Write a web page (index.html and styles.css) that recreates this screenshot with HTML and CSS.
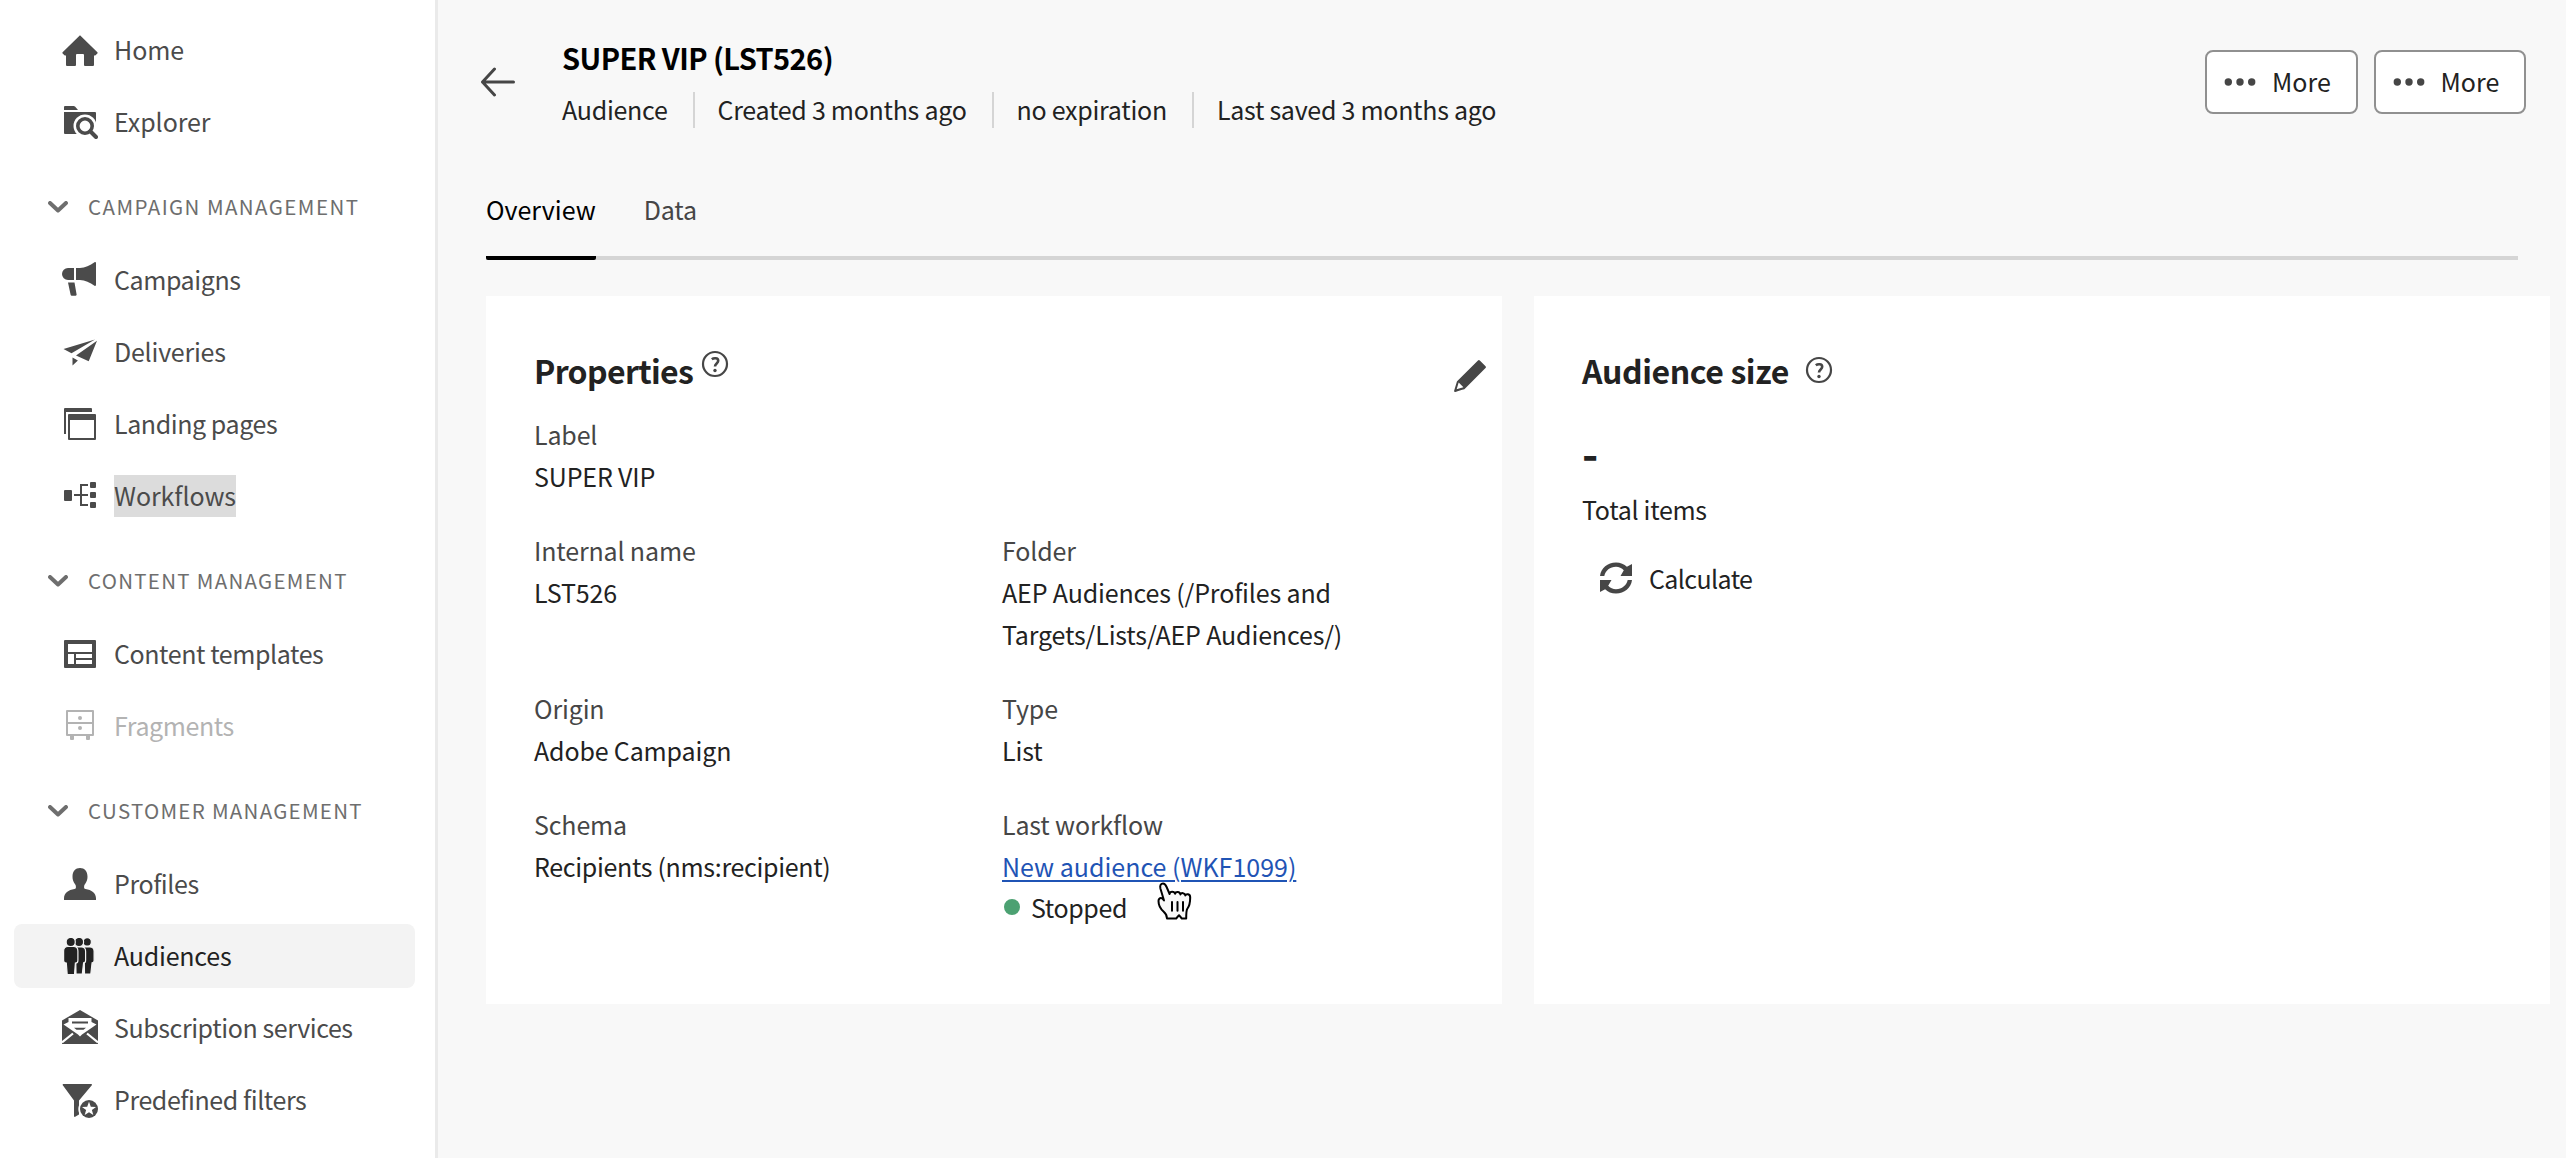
FILE: index.html
```html
<!DOCTYPE html>
<html lang="en">
<head>
<meta charset="utf-8">
<title>SUPER VIP (LST526)</title>
<link rel="stylesheet" href="styles.css">
</head>
<body>
<div class="app">
  <nav class="sidebar">
    <ul class="nav-list">
      <li class="nav-item loose"><svg class="icon" viewBox="0 0 36 36"><path d="M18 3.2 35.4 20.2a.9.9 0 0 1 0 1.2L33.2 23.5H32V33a1 1 0 0 1-1 1h-8a1 1 0 0 1-1-1V23a1 1 0 0 0-1-1h-6a1 1 0 0 0-1 1v10a1 1 0 0 1-1 1H5a1 1 0 0 1-1-1v-9.500H2.800L.6 21.400a.9.9 0 0 1 0-1.200z"/></svg><span>Home</span></li>
      <li class="nav-item loose"><svg class="icon" viewBox="0 0 36 36"><path d="M2 6V3a1 1 0 0 1 1-1h8.600a2 2 0 0 1 1.400.6L16 6zM2 8h31a1 1 0 0 1 1 1v21H3a1 1 0 0 1-1-1z"/><circle class="knockout" cx="23" cy="22" r="11.500"/><path class="knockout" d="M26 24h9v8h-9z"/><circle class="line thick" cx="23" cy="22" r="7.200"/><path class="line handle" d="M28.500 27.500 34 33"/></svg><span>Explorer</span></li>
    </ul>
    <h2 class="nav-heading wider"><svg class="chevron" viewBox="0 0 20 12"><path d="m2 2 8 7.500L18 2"/></svg><span>CAMPAIGN MANAGEMENT</span></h2>
    <ul class="nav-list">
      <li class="nav-item"><svg class="icon" viewBox="0 0 36 36"><path d="M12 6v12H6A6 6 0 0 1 6 6zM14 6h4c5 0 10-2.500 14.500-5.700.8-.5 1.500-.2 1.500.6v22.200c0 .8-.7 1.100-1.500.6C28 20.500 23 18 18 18h-4zM6 20.500h6.500L14.600 32.500a1 1 0 0 1-1 1.200H9.800a1.200 1.200 0 0 1-1.200-1z"/></svg><span>Campaigns</span></li>
      <li class="nav-item medium"><svg class="icon" viewBox="0 0 36 36"><path d="M1.500 15 33 5.500 9.500 19.200zM35 6.700 26.700 27.300 14 21.500zM10.500 23.500l5.400 2.900L10.500 31.500z"/></svg><span>Deliveries</span></li>
      <li class="nav-item"><svg class="icon" viewBox="0 0 36 36"><path d="M30 6V3a1 1 0 0 0-1-1H3a1 1 0 0 0-1 1v25h2V6z"/><path fill-rule="evenodd" d="M7 8h26a1 1 0 0 1 1 1v24a1 1 0 0 1-1 1H7a1 1 0 0 1-1-1V9a1 1 0 0 1 1-1zm1 6v18h24V14z"/></svg><span>Landing pages</span></li>
      <li class="nav-item loose"><svg class="icon" viewBox="0 0 36 36"><rect x="2" y="12" width="8" height="11" rx="1"/><rect x="28" y="4" width="6" height="6" rx="1"/><rect x="28" y="14" width="6" height="6" rx="1"/><rect x="28" y="24" width="6" height="6" rx="1"/><path d="M12 16h6V6h8v2h-6v8h6v2h-6v8h6v2h-8V18h-6z"/></svg><span class="selected-text">Workflows</span></li>
    </ul>
    <h2 class="nav-heading"><svg class="chevron" viewBox="0 0 20 12"><path d="m2 2 8 7.500L18 2"/></svg><span>CONTENT MANAGEMENT</span></h2>
    <ul class="nav-list">
      <li class="nav-item"><svg class="icon" viewBox="0 0 36 36"><path fill-rule="evenodd" d="M3 4h30a1 1 0 0 1 1 1v26a1 1 0 0 1-1 1H3a1 1 0 0 1-1-1V5a1 1 0 0 1 1-1zm3 4v8h24V8zm0 10v10h6V18zm8 0v4h16v-4zm0 6v4h16v-4z"/></svg><span>Content templates</span></li>
      <li class="nav-item disabled"><svg class="icon" viewBox="0 0 36 36"><path fill-rule="evenodd" d="M5 2h26a1 1 0 0 1 1 1v24a1 1 0 0 1-1 1h-3v3a1 1 0 0 1-1 1h-2a1 1 0 0 1-1-1v-3H12v3a1 1 0 0 1-1 1H9a1 1 0 0 1-1-1v-3H5a1 1 0 0 1-1-1V3a1 1 0 0 1 1-1zm1 2v10h24V4zm0 12v10h24V16z"/><circle cx="18" cy="10" r="2"/><circle cx="18" cy="20" r="2"/></svg><span>Fragments</span></li>
    </ul>
    <h2 class="nav-heading"><svg class="chevron" viewBox="0 0 20 12"><path d="m2 2 8 7.500L18 2"/></svg><span>CUSTOMER MANAGEMENT</span></h2>
    <ul class="nav-list">
      <li class="nav-item"><svg class="icon" viewBox="0 0 36 36"><path d="M34 34v-1.700c0-5-4.500-8.300-10.500-9.200-1-.1-1.400-.7-1.400-1.500v-1.200c0-1 .4-1.600 1-2.400C24.700 16 25.500 13.500 25.500 10.800 25.500 5 22.500 2 18 2S10.500 5 10.500 10.800c0 2.700.8 5.200 2.400 7.200.6.8 1 1.400 1 2.400v1.200c0 .8-.4 1.400-1.400 1.500C6.500 24 2 27.300 2 32.300V34z"/></svg><span>Profiles</span></li>
      <li class="nav-item active medium"><svg class="icon people" viewBox="0 0 36 36"><g><circle cx="25.200" cy="3.900" r="4.200"/><path d="M22 9h6c2.400 0 4.100 1.600 4.100 4.200v9.300c0 1.500-.8 2.300-2 2.300L28.800 36H22.500z"/></g><g><circle cx="17" cy="3.900" r="4.600"/><path d="M13.500 9h6c2.400 0 4.100 1.600 4.100 4.200v9.300c0 1.500-.8 2.300-2 2.300L20.300 36H14z"/></g><g><circle cx="8.700" cy="3.900" r="4.600"/><path d="M6 8.500h5.600c2.400 0 4.300 1.800 4.300 4.500v9.500c0 1.500-1 2.600-2.500 2.600L12.500 36.500H5.200L4.300 25.100c-1.800 0-2.700-1-2.700-2.600V13c0-2.700 1.900-4.500 4.400-4.500z"/></g></svg><span>Audiences</span></li>
      <li class="nav-item"><svg class="icon" viewBox="0 0 36 36"><path d="M18 0 36 10.500V34H0V10.500z"/><path class="knockout" d="M6.500 8h23v4l5 2.500L20 24.500 18 26.500l-2-2L1.500 14.500l5-2.500z"/><path class="cut" d="M0 32.500 11 23.500M36 32.500 25 23.500"/><path d="M10 11.500h16v2H10zM12 17.800h12l-2.500 2h-7z"/></svg><span>Subscription services</span></li>
      <li class="nav-item"><svg class="icon" viewBox="0 0 36 36"><path d="M1.300 2h28a.7.7 0 0 1 .5 1.200L17 18.500V32.500l-3.800 2.300a.8.8 0 0 1-1.200-.7V18.500L.8 3.200A.7.7 0 0 1 1.300 2z"/><circle class="knockout" cx="27" cy="27" r="10.700"/><circle cx="27" cy="27" r="9"/><path class="knockout" d="m27 19.800 1.800 4.900 5.200.2-4.100 3.200 1.400 5-4.300-2.900-4.300 2.900 1.400-5-4.100-3.200 5.200-.2z"/></svg><span>Predefined filters</span></li>
    </ul>
  </nav>

  <main class="main">
    <header class="page-header">
      <svg class="back" viewBox="0 0 36 32"><path d="M33.500 16H2.500M14.500 3 2.500 16l12 13"/></svg>
      <div class="titles">
        <h1>SUPER VIP (LST526)</h1>
        <div class="meta"><span>Audience</span><span>Created 3 months ago</span><span>no expiration</span><span>Last saved 3 months ago</span></div>
      </div>
      <div class="actions">
        <button class="more"><svg viewBox="0 0 32 8"><circle cx="4.300" cy="4" r="3.700"/><circle cx="16" cy="4" r="3.700"/><circle cx="27.700" cy="4" r="3.700"/></svg><span>More</span></button>
        <button class="more"><svg viewBox="0 0 32 8"><circle cx="4.300" cy="4" r="3.700"/><circle cx="16" cy="4" r="3.700"/><circle cx="27.700" cy="4" r="3.700"/></svg><span>More</span></button>
      </div>
    </header>

    <div class="tabs"><span class="tab current">Overview</span><span class="tab">Data</span></div>

    <div class="cards">
      <section class="card">
        <div class="card-title">
          <h3>Properties</h3>
          <svg class="help raised" viewBox="0 0 28 28"><circle class="line" cx="14" cy="14" r="12"/><path class="line q" d="M10.800 9.300C12.500 8 17.200 7.500 17.200 10.800c0 2.700-3.200 2.700-3.200 5.700"/><circle cx="14" cy="20.500" r="1.700"/></svg>
          <svg class="icon edit" viewBox="0 0 36 36"><path d="M33.567 8.200L27.800 2.432a1.215 1.215 0 0 0-.866-.353H26.900a1.371 1.371 0 0 0-.927.406L5.084 23.372a.99.99 0 0 0-.251.422L2.055 33.100c-.114.377.459.851.783.851a.251.251 0 0 0 .062-.007c.276-.063 7.866-2.344 9.311-2.778a.972.972 0 0 0 .414-.249l20.888-20.889a1.372 1.372 0 0 0 .4-.883 1.221 1.221 0 0 0-.346-.945zM11.400 29.316c-2.161.649-4.862 1.465-6.729 2.022l2.009-6.730z"/></svg>
        </div>
        <dl class="fields">
          <div class="field wide"><dt>Label</dt><dd>SUPER VIP</dd></div>
          <div class="field"><dt>Internal name</dt><dd>LST526</dd></div>
          <div class="field"><dt>Folder</dt><dd>AEP Audiences (/Profiles and<br>Targets/Lists/AEP Audiences/)</dd></div>
          <div class="field"><dt>Origin</dt><dd>Adobe Campaign</dd></div>
          <div class="field"><dt>Type</dt><dd>List</dd></div>
          <div class="field"><dt>Schema</dt><dd class="tight">Recipients (nms:recipient)</dd></div>
          <div class="field"><dt>Last workflow</dt><dd><a class="link">New audience (WKF1099)</a></dd><dd class="status"><i class="dot"></i><span>Stopped</span></dd></div>
        </dl>
        <svg class="cursor" viewBox="0 0 36 38"><path d="M3.400 6.500C2.600 3 4 1.500 6 1.500S8.700 3 9.600 5l3 7c.3-3 4.800-2.800 5.500-.2.600-2.500 4.800-2.200 5.300.6.700-2 4.600-1.600 4.900 1 .9-1.900 4.900-1.700 4.900 2 0 6.300-1.200 9.200-3 11.600-.9 1.500-1 4.500-1 9.500h-4.400L22 33.200l-2.800 3.300H10c0-3.500-1.200-5-3.500-7-3-2.700-5-6.500-5-10.500 0-2 1.300-3.200 2.800-2.900 1.200.3 1.800 1.200 2.700 2.400z"/><path d="M15 20v8.700M20.500 20v8.700M26 20v8.700"/></svg>
      </section>
      <section class="card">
        <div class="card-title size-title">
          <h3>Audience size</h3>
          <svg class="help" viewBox="0 0 28 28"><circle class="line" cx="14" cy="14" r="12"/><path class="line q" d="M10.800 9.300C12.500 8 17.200 7.500 17.200 10.800c0 2.700-3.200 2.700-3.200 5.700"/><circle cx="14" cy="20.500" r="1.700"/></svg>
        </div>
        <div class="total">-</div>
        <div class="total-label">Total items</div>
        <div class="calculate"><svg class="icon" viewBox="0 0 36 36"><path id="half" d="M2 16C3 8 9.500 2.500 18 2.500c4.500 0 8.200 1.600 10.900 4.300L34 4v12H22.500l3.300-5.800C23.800 8 21 6.800 18 6.800 12 6.800 7.500 10.600 6.300 16z"/><use href="#half" transform="rotate(180 18 18)"/></svg><span>Calculate</span></div>
      </section>
    </div>
  </main>
</div>
</body>
</html>
```
FILE: styles.css
```css
* { box-sizing: border-box; margin: 0; padding: 0; }

body {
  background: #f8f8f8;
  color: #222;
  font: 25px/42px "Noto Sans CJK SC", "Noto Sans", sans-serif;
  letter-spacing: -0.15px;
  height: 1158px;
  overflow: hidden;
}

.app { display: flex; height: 1158px; }

svg { display: block; flex: none; }

/* Sidebar */
.sidebar {
  width: 438px;
  flex: none;
  padding: 18px 20px 0 14px;
  background: #fff;
  border-right: 3px solid #eaeaea;
  color: #4b4b4b;
}

.nav-list { list-style: none; display: flex; flex-direction: column; gap: 8px; }

.nav-item {
  height: 64px;
  display: flex;
  align-items: center;
  gap: 16px;
  padding-left: 48px;
  border-radius: 8px;
  white-space: nowrap;
  letter-spacing: -0.42px;
}

.nav-item.loose { letter-spacing: -0.07px; }
.nav-item.medium { letter-spacing: -0.22px; }
.nav-item span { padding-bottom: 2px; }
.nav-item.active { background: #f3f3f3; color: #222; }
.nav-item.disabled { color: #b3b3b3; }
.nav-item .selected-text { padding: 0; height: 42px; line-height: 40px; background: #dcdcdc; }

.icon { width: 36px; height: 36px; fill: currentColor; }
.knockout { fill: #fff; }
.cut { stroke: #fff; stroke-width: 2.2; fill: none; }
.line { fill: none; stroke: currentColor; stroke-width: 2.2; }
.thick { stroke-width: 3.6; }
.handle { stroke-width: 4; stroke-linecap: round; }
.people g { stroke: #f3f3f3; stroke-width: 1.2; }

.nav-heading {
  height: 94px;
  display: flex;
  align-items: center;
  gap: 20px;
  padding: 10px 0 0 34px;
  font-size: 20.5px;
  font-weight: 400;
  letter-spacing: 1.28px;
  color: #6e6e6e;
  white-space: nowrap;
}
.nav-heading.wider { letter-spacing: 1.43px; }

.chevron { width: 20px; height: 12px; margin-top: 2px; fill: none; stroke: currentColor; stroke-width: 4; stroke-linecap: round; stroke-linejoin: round; }

/* Page header */
.main { flex: 1; min-width: 0; }

.page-header { display: flex; padding: 38px 40px 0 42px; height: 170px; }
.back { width: 36px; height: 32px; margin-top: 28px; fill: none; stroke: #464646; stroke-width: 3; stroke-linecap: round; stroke-linejoin: round; }
.titles { margin-left: 46px; }
h1 { font-size: 29px; line-height: 38px; font-weight: 700; letter-spacing: -0.58px; color: #000; }
.meta { display: flex; height: 36px; margin-top: 16px; line-height: 34px; letter-spacing: -0.27px; white-space: nowrap; }
.meta span + span { margin-left: 25px; padding-left: 23px; border-left: 2px solid #d5d5d5; }

.actions { display: flex; gap: 16px; margin: 12px 0 0 auto; }
.more {
  width: 152.5px;
  height: 64px;
  display: flex;
  align-items: center;
  gap: 16px;
  padding: 0 0 2px 17px;
  border: 2px solid #909090;
  border-radius: 8px;
  background: #fff;
  color: #222;
  font: inherit;
}
.more svg { width: 32px; height: 8px; margin-top: 2px; fill: #464646; }

/* Tabs */
.tabs { display: flex; gap: 48px; margin: 0 48px; height: 90px; border-bottom: 4px solid #d5d5d5; color: #464646; }
.tab { height: 90px; padding-top: 18px; }
.tab.current { letter-spacing: 0; color: #000; border-bottom: 4px solid #000; border-radius: 2px; }

/* Cards */
.cards { display: grid; grid-template-columns: 1016px 1016px; gap: 32px; padding: 36px 0 0 48px; }
.card { position: relative; height: 708px; padding: 48px 16px 0 48px; background: #fff; }
.card-title { display: flex; height: 69px; }
h3 { font-size: 32px; line-height: 52px; font-weight: 700; letter-spacing: -0.65px; }
.size-title h3 { letter-spacing: -0.4px; }
.help { width: 28px; height: 28px; margin: 12px 0 0 16px; color: #464646; fill: currentColor; }
.help.raised { margin: 6px 0 0 8px; }
.help .q { stroke-width: 2.6; }
.edit { margin: 14px -2px 0 auto; color: #464646; }

.fields { display: grid; grid-template-columns: 468px 468px; row-gap: 32px; }
.wide { grid-column: 1 / -1; }
dt { color: #464646; }
.tight { letter-spacing: -0.32px; }
.link { letter-spacing: 0; color: #1f54b5; text-decoration: underline; text-decoration-thickness: 2px; text-underline-offset: 3px; }
.status { display: flex; align-items: center; gap: 11px; padding-left: 2px; line-height: 40px; letter-spacing: -0.4px; }
.dot { width: 16px; height: 16px; border-radius: 50%; background: #4ca172; }
.cursor { position: absolute; left: 671px; top: 586px; width: 36px; height: 38px; fill: #f8f8f8; stroke: #000; stroke-width: 2; stroke-linejoin: round; stroke-linecap: round; }

.total { padding-top: 9px; font-size: 44px; line-height: 60px; font-weight: 700; }
.total-label { margin-top: 6px; letter-spacing: -0.3px; }
.calculate { display: flex; align-items: center; gap: 15px; margin: 27px 0 0 16px; letter-spacing: -0.6px; }
.calculate .icon { color: #464646; }
```
